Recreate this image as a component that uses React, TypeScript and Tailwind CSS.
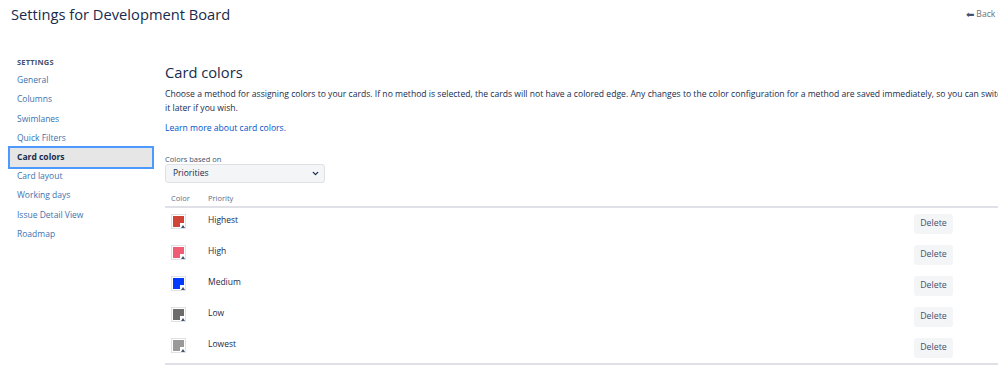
import { ChevronDown } from "lucide-react";

const NAV_ITEMS = [
  "General",
  "Columns",
  "Swimlanes",
  "Quick Filters",
  "Card colors",
  "Card layout",
  "Working days",
  "Issue Detail View",
  "Roadmap",
];

const PRIORITIES = [
  { name: "Highest", color: "bg-[#d04437]" },
  { name: "High", color: "bg-[#f15c75]" },
  { name: "Medium", color: "bg-[#0039ff]" },
  { name: "Low", color: "bg-[#6c6c6c]" },
  { name: "Lowest", color: "bg-[#999999]" },
];

function Swatch({ color }: { color: string }) {
  return (
    <div className="relative mt-[6px] ml-[6px] h-[15px] w-[15px] border border-[#dfe1e6] bg-white p-px">
      <div className={`h-full w-full ${color}`} />
      <div className="absolute bottom-0 right-0 flex h-[5px] w-[5px] items-end justify-center bg-white">
        <div className="h-0 w-0 border-x-[2px] border-b-[3px] border-x-transparent border-b-[#42526e]" />
      </div>
    </div>
  );
}

export default function App() {
  return (
    <div className="relative h-[382px] w-[998px] overflow-hidden bg-white font-['Open_Sans',sans-serif] text-[#172b4d]">
      <header className="flex h-[32px] items-start justify-between">
        <h1 className="pl-[11px] pt-[4px] text-[14.7px] leading-[20px] font-normal text-[#172b4d]">
          Settings for Development Board
        </h1>
        <a className="-mr-[34px] flex items-center gap-[2px] whitespace-nowrap pt-[8px] text-[8.6px] text-[#707070]">
          <span className="text-[10px] leading-none text-[#42526e]">⬅</span>
          Back to board
        </a>
      </header>

      <div className="flex">
        <nav className="w-[165px] shrink-0 pt-[24px]">
          <div className="pl-[17px] text-[7.5px] font-bold uppercase leading-[12px] tracking-[0.2px] text-[#42526e]">
            Settings
          </div>
          <ul className="mt-[3px] pl-[10px]">
            {NAV_ITEMS.map((item) =>
              item === "Card colors" ? (
                <li
                  key={item}
                  className="flex h-[19.2px] w-[142px] items-center bg-[#e6e6e6] pl-[7px] text-[8.5px] font-bold text-[#172b4d] outline-2 outline-[#4c9aff]"
                >
                  {item}
                </li>
              ) : (
                <li
                  key={item}
                  className="flex h-[19.2px] items-center pl-[7px] text-[8.5px] text-[#3b73af]"
                >
                  {item}
                </li>
              )
            )}
          </ul>
        </nav>

        <main className="w-[880px] shrink-0 pt-[31px]">
          <h2 className="text-[14.7px] font-normal leading-[18px]">Card colors</h2>
          <p className="mt-[7px] w-[845px] text-[8.6px] leading-[13.5px] text-[#172b4d]">
            Choose a method for assigning colors to your cards. If no method is
            selected, the cards will not have a colored edge. Any changes to the
            color configuration for a method are saved immediately, so you can
            switch it later if you wish.
          </p>
          <a className="mt-[7px] block text-[8.6px] leading-[13px] text-[#0052cc]">
            Learn more about card colors.
          </a>

          <label className="mt-[19px] block text-[7.5px] leading-[10px] text-[#42526e]">
            Colors based on
          </label>
          <div className="flex h-[19px] w-[160px] items-center justify-between rounded-[3px] border border-[#dfe1e6] bg-[#f4f5f7] pl-[7px] pr-[4px] text-[8.5px]">
            <span>Priorities</span>
            <ChevronDown size={9} strokeWidth={3.5} className="text-[#172b4d]" />
          </div>

          <div className="mt-[8px]">
            <div className="flex h-[17px] items-center border-b-2 border-[#dfe1e6] text-[7.5px] text-[#5e6c84]">
              <div className="w-[43px] pl-[6px]">Color</div>
              <div>Priority</div>
            </div>
            {PRIORITIES.map((p) => (
              <div key={p.name} className="flex h-[31px] items-start">
                <div className="w-[43px]">
                  <Swatch color={p.color} />
                </div>
                <div className="mt-[5px] w-[706px] text-[8.5px] leading-[14px]">
                  {p.name}
                </div>
                <button className="mt-[6px] flex h-[20px] w-[39px] items-center justify-center rounded-[3px] bg-[#f4f5f7] text-[8.8px] text-[#42526e]">
                  Delete
                </button>
              </div>
            ))}
            <div className="border-b-2 border-[#dfe1e6]" />
          </div>
        </main>
      </div>
    </div>
  );
}
